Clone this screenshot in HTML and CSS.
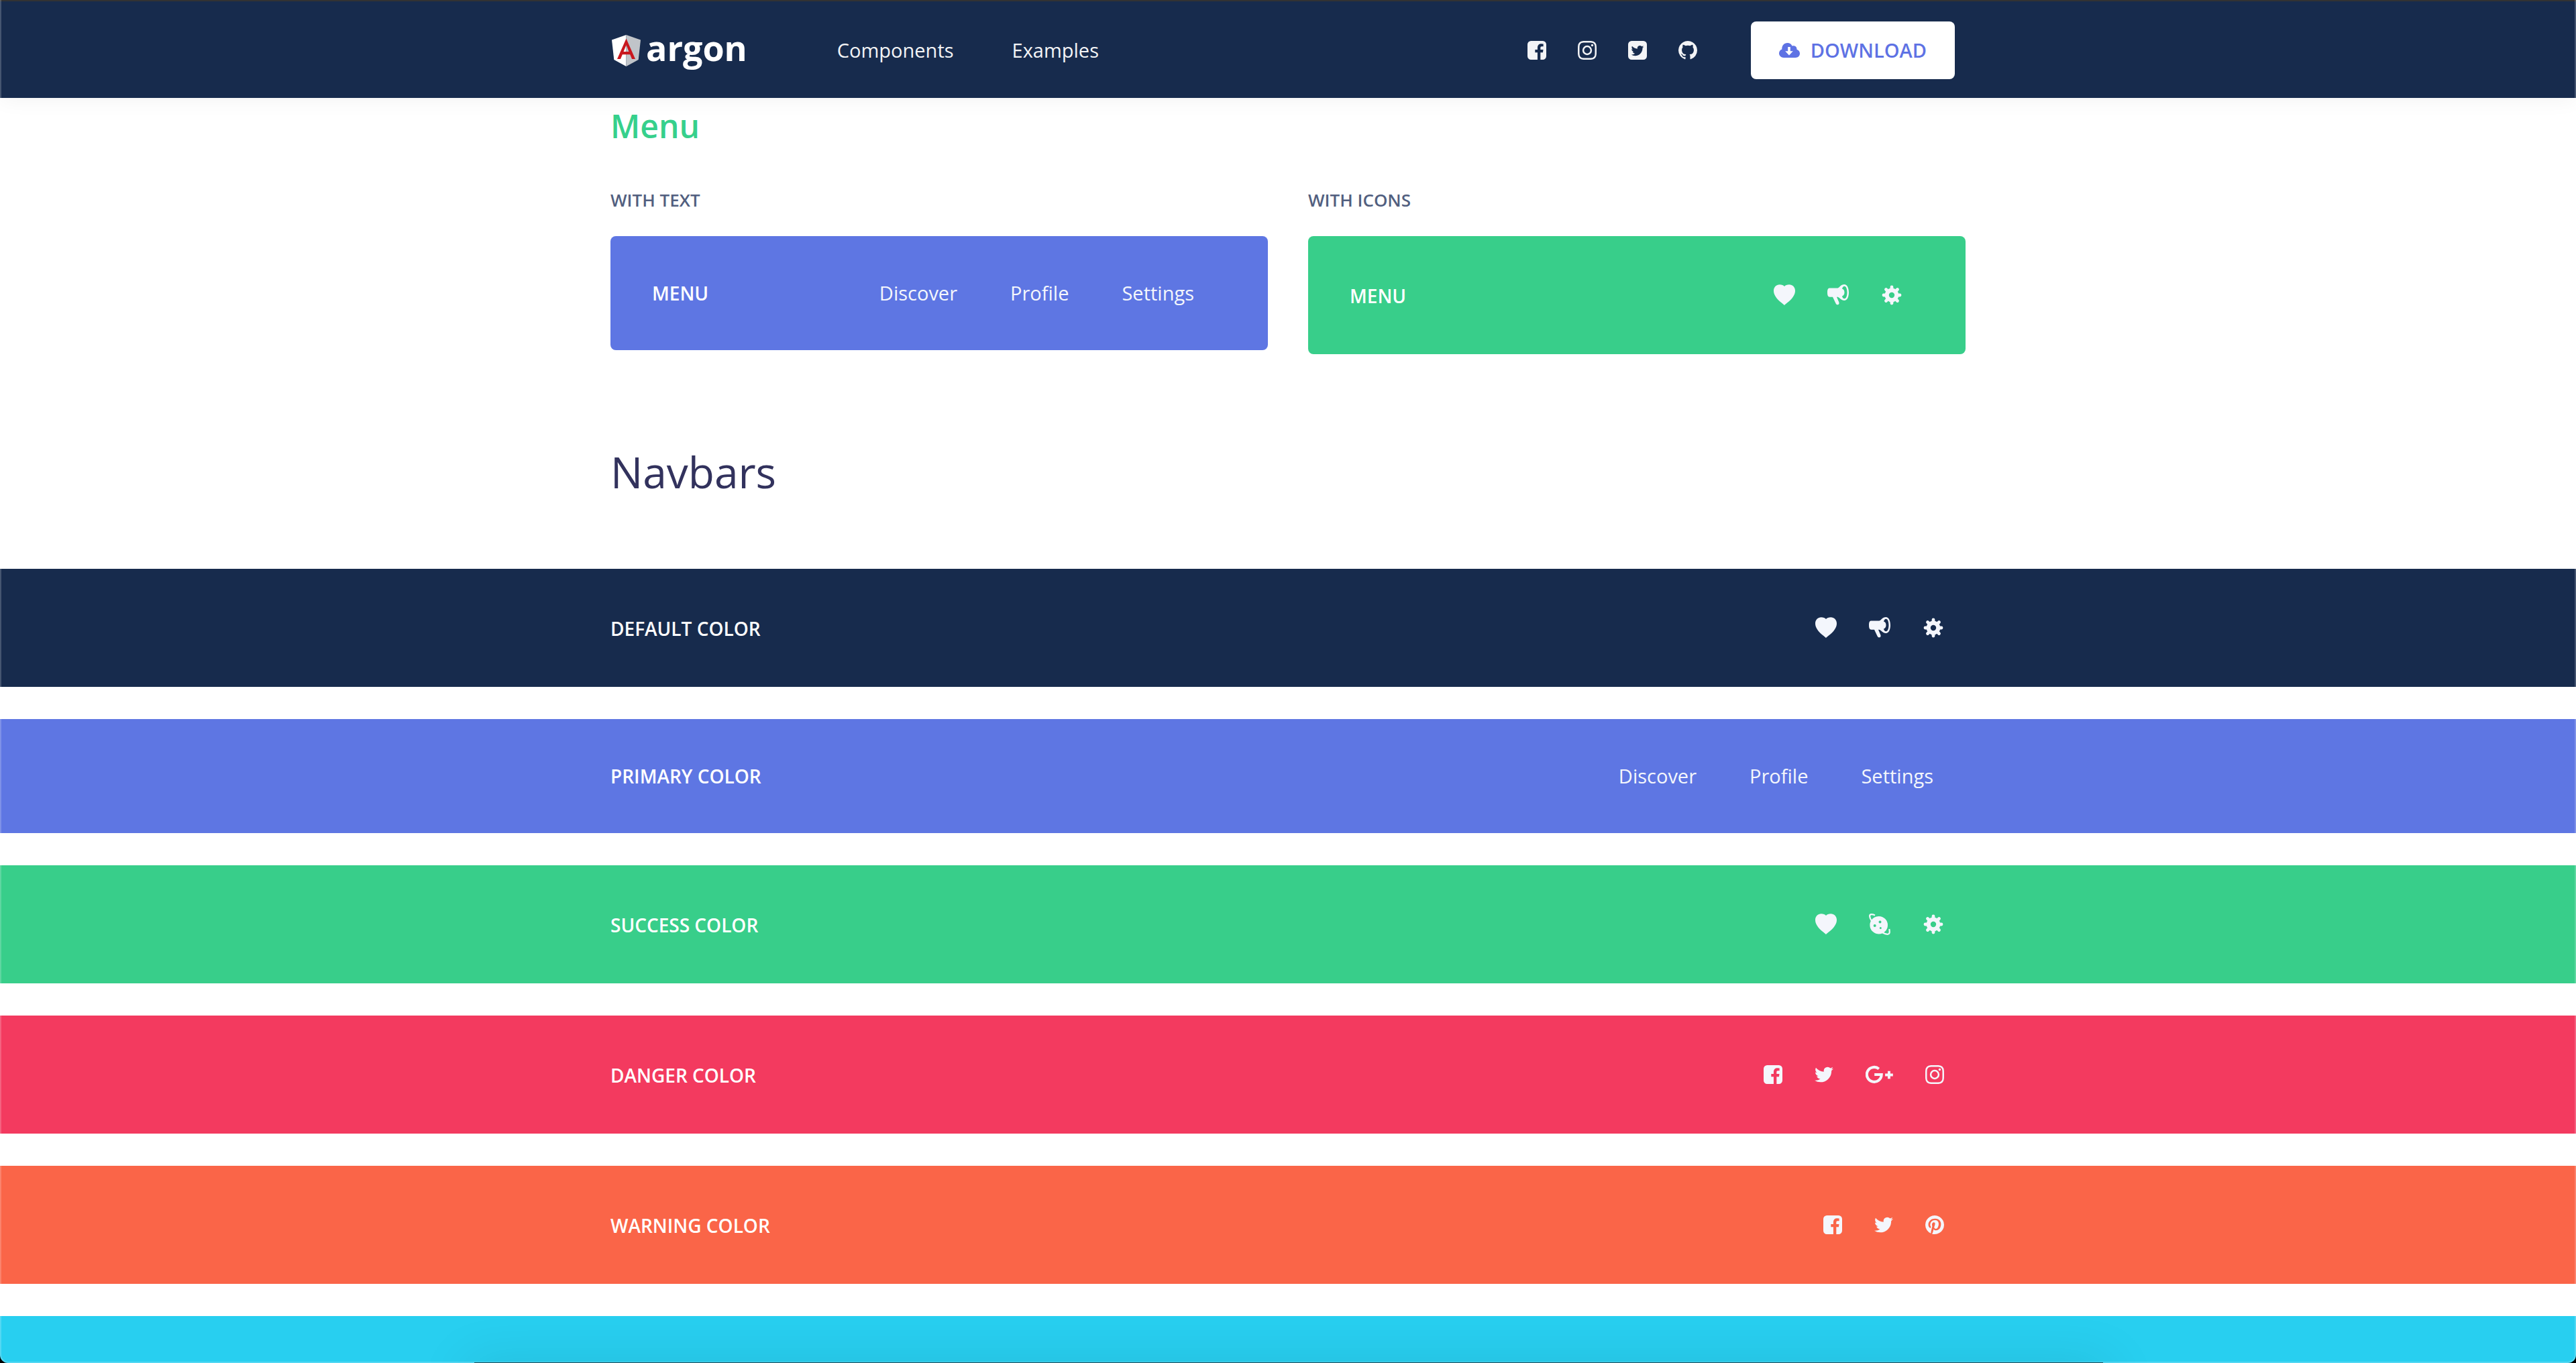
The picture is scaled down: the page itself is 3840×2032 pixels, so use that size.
FILE: index.html
```html
<!DOCTYPE html>
<html lang="en">
<head>
<meta charset="utf-8">
<meta name="viewport" content="width=device-width, initial-scale=1">
<title>Argon - Components</title>
<link rel="stylesheet" href="styles.css">
</head>
<body>
<svg class="sprite" aria-hidden="true">
  <symbol id="facebook-square" viewBox="128 128 1536 1536"><path d="M1376 128q119 0 203.500 84.500t84.500 203.500v960q0 119-84.500 203.500t-203.500 84.500h-188v-595h199l30-232h-229v-148q0-56 23.500-84t91.500-28l122-1v-207q-63-9-178-9-136 0-217.500 80t-81.500 226v171h-200v232h200v595h-532q-119 0-203.500-84.500t-84.500-203.500v-960q0-119 84.500-203.500t203.500-84.500h960z"/></symbol>
  <symbol id="twitter-square" viewBox="128 128 1536 1536"><path d="M1408 610q-56 25-121 34 68-40 93-117-65 38-134 51-61-66-153-66-87 0-148.500 61.500t-61.500 148.500q0 29 5 48-129-7-242-65t-192-155q-29 50-29 106 0 114 91 175-47-1-100-26v2q0 75 50 133.500t123 72.500q-29 8-51 8-13 0-39-4 21 63 74.500 104t121.500 42q-116 90-261 90-26 0-50-3 148 94 322 94 112 0 210-35.500t168-95 120.500-137 75-162 24.500-168.500q0-18-1-27 63-45 105-109zm256-194v960q0 119-84.500 203.500t-203.500 84.500h-960q-119 0-203.500-84.500t-84.500-203.500v-960q0-119 84.500-203.500t203.500-84.500h960q119 0 203.500 84.500t84.500 203.500z"/></symbol>
  <symbol id="instagram" viewBox="128 128 1536 1536"><path d="M1152 896q0-106-75-181t-181-75-181 75-75 181 75 181 181 75 181-75 75-181zm138 0q0 164-115 279t-279 115-279-115-115-279 115-279 279-115 279 115 115 279zm108-410q0 38-27 65t-65 27-65-27-27-65 27-65 65-27 65 27 27 65zm-502-220q-7 0-76.500-.5t-105.500 0-96.500 3-103 10-71.500 18.500q-50 20-88 58t-58 88q-11 29-18.500 71.500t-10 103-3 96.500 0 105.500.5 76.500-.5 76.500 0 105.500 3 96.500 10 103 18.500 71.500q20 50 58 88t88 58q29 11 71.500 18.500t103 10 96.500 3 105.500 0 76.500-.5 76.500.5 105.500 0 96.500-3 103-10 71.500-18.500q50-20 88-58t58-88q11-29 18.500-71.500t10-103 3-96.500 0-105.500-.5-76.500.5-76.500 0-105.500-3-96.500-10-103-18.500-71.500q-20-50-58-88t-88-58q-29-11-71.500-18.500t-103-10-96.500-3-105.500 0-76.500.5zm768 630q0 229-5 317-10 208-124 322t-322 124q-88 5-317 5t-317-5q-208-10-322-124t-124-322q-5-88-5-317t5-317q10-208 124-322t322-124q88-5 317-5t317 5q208 10 322 124t124 322q5 88 5 317z"/></symbol>
  <symbol id="github" viewBox="128 128 1536 1536"><path d="M896 128q209 0 385.500 103t279.500 279.500 103 385.500q0 251-146.500 451.500t-378.500 277.500q-27 5-40-7t-13-30q0-3 .5-76.500t.5-134.500q0-97-52-142 57-6 102.500-18t94-39 81-66.500 53-105 20.500-150.500q0-119-79-206 37-91-8-204-28-9-81 11t-92 44l-38 24q-93-26-192-26t-192 26q-16-11-42.500-27t-83.500-38.500-85-13.500q-45 113-8 204-79 87-79 206 0 85 20.500 150t52.500 105 80.500 67 94 39 102.500 18q-39 36-49 103-21 10-45 15t-57 5-65.500-21.500-55.500-62.500q-19-32-48.500-52t-49.500-24l-20-3q-21 0-29 4.500t-5 11.500 9 14 13 12l7 5q22 10 43.500 38t31.500 51l10 23q13 38 44 61.500t67 30 69.500 7 55.500-3.500l23-4q0 38 .5 88.500t.5 54.500q0 18-13 30t-40 7q-232-77-378.500-277.500t-146.500-451.500q0-209 103-385.500t279.500-279.500 385.500-103z"/></symbol>
  <symbol id="twitter" viewBox="108 128 1576 1536"><path d="M1684 408q-67 98-162 167 1 14 1 42 0 130-38 259.500t-115.500 248.500-184.500 210.500-258 146-323 54.500q-271 0-496-145 35 4 78 4 225 0 401-138-105-2-188-64.500t-114-159.500q33 5 61 5 43 0 85-11-112-23-185.500-111.500t-73.500-205.500v-4q68 38 146 41-66-44-105-115t-39-154q0-88 44-163 121 149 294.500 238.500t371.500 99.500q-8-38-8-74 0-134 94.500-228.500t228.500-94.500q140 0 236 102 109-21 205-78-37 115-142 178 93-10 186-50z"/></symbol>
  <symbol id="pinterest" viewBox="128 128 1536 1536"><path d="M1664 896q0 209-103 385.500t-279.500 279.500-385.500 103q-111 0-218-32 59-93 78-164 9-34 54-211 20 39 73 67.500t114 28.500q121 0 216-68.500t147-188.500 52-270q0-114-59.500-214t-172.500-163-255-63q-105 0-196 29t-154.500 77-109 110.500-67 129.500-21.500 134q0 104 40 183t117 111q30 12 38-20 2-7 8-31t8-30q6-23-11-43-51-61-51-151 0-151 104.500-259.500t273.500-108.500q151 0 235.500 82t84.500 213q0 170-68.500 289t-175.500 119q-61 0-98-43.500t-23-104.500q8-35 26.500-93.500t30-103 11.500-75.500q0-50-27-83t-77-33q-62 0-105 57t-43 142q0 73 25 122l-99 418q-17 70-13 177-206-91-333-281t-127-423q0-209 103-385.500t279.500-279.500 385.500-103 385.500 103 279.500 279.500 103 385.500z"/></symbol>
  <symbol id="google-plus" viewBox="0 0 42 28"><path d="M20.300 5.300A11.200 11.200 0 1 0 24.300 14H13.500" fill="none" stroke="currentColor" stroke-width="4.200"/><path d="M33.800 8.500h4v4h4v4h-4v4h-4v-4h-4v-4h4z"/></symbol>
  <symbol id="heart" viewBox="0 0 32 32"><path d="M16 31C13.800 28.600 0 20.500 0 9.600C0 4 4 .3 8.800.3C12 .3 14.600 1.400 16 3C17.400 1.400 20 .3 23.200.3C28 .3 32 4 32 9.600C32 20.500 18.200 28.600 16 31z"/></symbol>
  <symbol id="horn" viewBox="0 0 32 32"><path fill-rule="evenodd" d="M3.500 5.500H15.500C18 5 20 0 25.300 0C29.500 0 32 5.500 32 12S29.500 24 25.300 24C20.500 24 18.500 19.500 15.500 18.700H14L17.300 26.500C18 28.500 17.200 29.700 16 30.200C14.500 30.600 13.300 30 12.500 28.200L8 18.700H3.500C1 18.700 0 16.500 0 12S1 5.500 3.500 5.500zM25.500 2.700C23.500 2.700 22.500 4.500 22 6.600C24.200 7.300 25.500 9 25.500 12S24.200 16.700 22 17.500C22.500 19.500 23.500 21.300 25.500 21.300C28 21.300 29.500 17 29.500 12S28 2.700 25.500 2.700z"/></symbol>
  <symbol id="gear" viewBox="0 0 32 32"><g fill="none" stroke="currentColor"><circle cx="16" cy="16" r="7.300" stroke-width="6.200"/><path stroke-width="4.800" stroke-linecap="round" d="M16 8V4M16 24v4M8 16H4M24 16h4M10.300 10.300L7.500 7.500M21.700 10.300l2.800-2.800M10.300 21.700l-2.800 2.800M21.700 21.700l2.800 2.800"/></g></symbol>
  <symbol id="planet" viewBox="0 0 32 32"><path fill-rule="evenodd" d="M14.700 3.900a13.300 13.300 0 1 1 0 26.600a13.300 13.300 0 1 1 0-26.600zM16.500 10.500a2 2 0 1 0 0 4a2 2 0 1 0 0-4zM8.700 16a2 2 0 1 0 0 4a2 2 0 1 0 0-4zM17.300 19.900a1.500 1.500 0 1 0 0 3a1.500 1.500 0 1 0 0-3z"/><path fill="none" stroke="currentColor" stroke-width="2.200" d="M9 2.500C5 .8 1 .2 1.100 4C1.200 6.500 2.500 8.500 4 11M30.300 23C31 27 31.500 30.800 27.500 30.800C25 30.800 23 30 20.500 28.500"/></symbol>
  <symbol id="cloud-download" viewBox="0 0 31 22"><path fill-rule="evenodd" d="M7 22C3 22 0 19.200 0 15.600C0 12.400 1.800 10.300 4.300 9.500C4 4 7.500 0 12.500 0C16 0 18.500 1.800 19.500 4.500C23.200 3.200 26.800 5.500 26.500 9.800C29.300 10.800 31 13 31 15.800C31 19.300 28.200 22 24.500 22zM13.200 6v6.300H9.200l5.800 6.200l5.800-6.200h-4V6z"/></symbol>
</svg>

<header class="topbar">
  <div class="container topbar-inner">
    <a class="logo" href="#" aria-label="argon">
      <svg class="logo-mark" viewBox="0 0 43 47" aria-hidden="true"><path fill="#fff" d="M21.500 0L0 7.500L3.300 37L21.500 47z"/><path fill="#c0c4c9" d="M21.500 0L43 7.500L39.700 37L21.500 47z"/><path fill="#c9171e" d="M21.500 5.500L8 36h5l2.800-6.800h11.400L30 36h5zM21.500 15.200l4 9.700h-8z"/></svg>
      <span>argon</span>
    </a>
    <nav class="topnav">
      <a href="#">Components</a>
      <a href="#">Examples</a>
    </nav>
    <div class="social">
      <a href="#" aria-label="Facebook"><svg class="fa"><use href="#facebook-square"/></svg></a>
      <a href="#" aria-label="Instagram"><svg class="fa"><use href="#instagram"/></svg></a>
      <a href="#" aria-label="Twitter"><svg class="fa"><use href="#twitter-square"/></svg></a>
      <a href="#" aria-label="Github"><svg class="fa"><use href="#github"/></svg></a>
    </div>
    <button class="download" type="button"><svg aria-hidden="true"><use href="#cloud-download"/></svg>Download</button>
  </div>
</header>

<main>
  <section class="container">
    <h3 class="menu-title">Menu</h3>
    <div class="columns">
      <div>
        <small class="label">With text</small>
        <nav class="bar card primary">
          <a class="brand" href="#">Menu</a>
          <div class="links"><a href="#">Discover</a><a href="#">Profile</a><a href="#">Settings</a></div>
        </nav>
      </div>
      <div>
        <small class="label">With icons</small>
        <nav class="bar card success tall">
          <a class="brand" href="#">Menu</a>
          <div class="icons">
            <a href="#" aria-label="Favorites"><svg class="ni"><use href="#heart"/></svg></a>
            <a href="#" aria-label="Announcements"><svg class="ni"><use href="#horn"/></svg></a>
            <a href="#" aria-label="Settings"><svg class="ni"><use href="#gear"/></svg></a>
          </div>
        </nav>
      </div>
    </div>
    <h2 class="navbars-title">Navbars</h2>
  </section>

  <div class="stack">
    <nav class="default tall"><div class="container bar">
      <a class="brand" href="#">Default Color</a>
      <div class="icons">
        <a href="#" aria-label="Favorites"><svg class="ni"><use href="#heart"/></svg></a>
        <a href="#" aria-label="Announcements"><svg class="ni"><use href="#horn"/></svg></a>
        <a href="#" aria-label="Settings"><svg class="ni"><use href="#gear"/></svg></a>
      </div>
    </div></nav>
    <nav class="primary"><div class="container bar">
      <a class="brand" href="#">Primary Color</a>
      <div class="links"><a href="#">Discover</a><a href="#">Profile</a><a href="#">Settings</a></div>
    </div></nav>
    <nav class="success tall"><div class="container bar">
      <a class="brand" href="#">Success Color</a>
      <div class="icons">
        <a href="#" aria-label="Favorites"><svg class="ni"><use href="#heart"/></svg></a>
        <a href="#" aria-label="Explore"><svg class="ni"><use href="#planet"/></svg></a>
        <a href="#" aria-label="Settings"><svg class="ni"><use href="#gear"/></svg></a>
      </div>
    </div></nav>
    <nav class="danger tall"><div class="container bar">
      <a class="brand" href="#">Danger Color</a>
      <div class="icons">
        <a href="#" aria-label="Facebook"><svg class="fa"><use href="#facebook-square"/></svg></a>
        <a href="#" aria-label="Twitter"><svg class="fa"><use href="#twitter"/></svg></a>
        <a href="#" aria-label="Google Plus"><svg class="fa wide"><use href="#google-plus"/></svg></a>
        <a href="#" aria-label="Instagram"><svg class="fa"><use href="#instagram"/></svg></a>
      </div>
    </div></nav>
    <nav class="warning tall"><div class="container bar">
      <a class="brand" href="#">Warning Color</a>
      <div class="icons">
        <a href="#" aria-label="Facebook"><svg class="fa"><use href="#facebook-square"/></svg></a>
        <a href="#" aria-label="Twitter"><svg class="fa"><use href="#twitter"/></svg></a>
        <a href="#" aria-label="Pinterest"><svg class="fa"><use href="#pinterest"/></svg></a>
      </div>
    </div></nav>
    <nav class="info tall"><div class="container bar"></div></nav>
  </div>
</main>

<div class="frame" aria-hidden="true"></div>
<div class="dock" aria-hidden="true"></div>
</body>
</html>
```
FILE: styles.css
```css
* { box-sizing: border-box; }

html { overflow: hidden; }

body {
  margin: 0;
  height: 100vh;
  overflow: hidden;
  background: #fff;
  font-family: "Open Sans", "Noto Sans", sans-serif;
  font-size: 29px;
  line-height: 44px;
  color: #525f7f;
}

a { color: inherit; text-decoration: none; }
svg { display: block; fill: currentColor; }
.sprite { position: absolute; width: 0; height: 0; }

.container {
  width: 100%;
  max-width: 2080px;
  margin: 0 auto;
  padding: 0 30px;
}

/* Top bar */
.topbar {
  position: relative;
  background: #172b4d;
  color: #f3f4f6;
  border-top: 2px solid #333;
  box-shadow: 0 0 32px rgba(0, 0, 0, .06);
}
.topbar-inner {
  display: flex;
  align-items: center;
  padding-top: 30px;
  padding-bottom: 28px;
}
.logo {
  display: flex;
  align-items: center;
  gap: 8px;
  padding-left: 2px;
  color: #fff;
  font-size: 52px;
  font-weight: 700;
  line-height: 56px;
}
.logo span { padding-bottom: 8px; }
.logo-mark { width: 43px; height: 47px; }
.topnav { display: flex; gap: 87px; margin-left: 134px; }
.social { display: flex; gap: 47px; margin-left: auto; }
.fa { width: 28px; height: 28px; }
.fa.wide { width: 41px; }
.ni { width: 32px; height: 32px; }

.download {
  display: flex;
  align-items: center;
  gap: 16px;
  height: 86px;
  margin: 0 16px 0 80px;
  padding: 0 42px;
  border: 0;
  border-radius: 8px;
  background: #fff;
  color: #5e72e4;
  font: inherit;
  font-weight: 600;
  text-transform: uppercase;
}
.download svg { width: 31px; height: 22px; }

/* Menu section */
.menu-title {
  margin: 0 0 54px;
  padding-top: 6px;
  color: #36d08c;
  font-size: 48px;
  font-weight: 600;
  line-height: 72px;
}
.columns {
  display: grid;
  grid-template-columns: 1fr 1fr;
  align-items: start;
  gap: 60px;
  min-height: 250px;
}
.label {
  display: block;
  margin-bottom: 34px;
  font-size: 26px;
  font-weight: 600;
  line-height: 40px;
  text-transform: uppercase;
}
.navbars-title {
  margin: 134px 0 102px;
  color: #32325d;
  font-size: 64px;
  font-weight: 400;
  line-height: 84px;
}

/* Navbars */
.bar {
  display: flex;
  align-items: center;
  justify-content: space-between;
  min-height: 170px;
  color: #f4f6fc;
}
.tall, .tall .bar { min-height: 176px; }
.card { padding: 0 62px; border-radius: 8px; }
.brand {
  color: #fff;
  font-size: 28px;
  font-weight: 600;
  text-transform: uppercase;
}
.tall .brand { padding-top: 2px; }
.links { display: flex; gap: 79px; padding-right: 48px; }
.icons { display: flex; align-items: center; gap: 48px; padding-right: 32px; }
.stack { display: grid; gap: 48px; }

.default { background: #172b4d; }
.primary { background: #5e76e3; }
.success { background: #38ce8a; }
.danger { background: #f33a5f; }
.warning { background: #fa6548; }
.info { background: #28cff0; }

/* Window edge and the panel that rises behind the lower edge */
.frame {
  position: fixed;
  inset: 0;
  border: 2px solid rgba(255, 255, 255, .2);
  border-top: 0;
  border-radius: 0 0 12px 12px;
  box-shadow: 0 20px 0 20px #000;
  pointer-events: none;
}
.dock {
  position: fixed;
  right: 705px;
  bottom: 0;
  left: 707px;
  height: 1px;
  background: #174a58;
  box-shadow: 0 24px 80px 8px rgba(0, 0, 0, .3);
  pointer-events: none;
}
```
